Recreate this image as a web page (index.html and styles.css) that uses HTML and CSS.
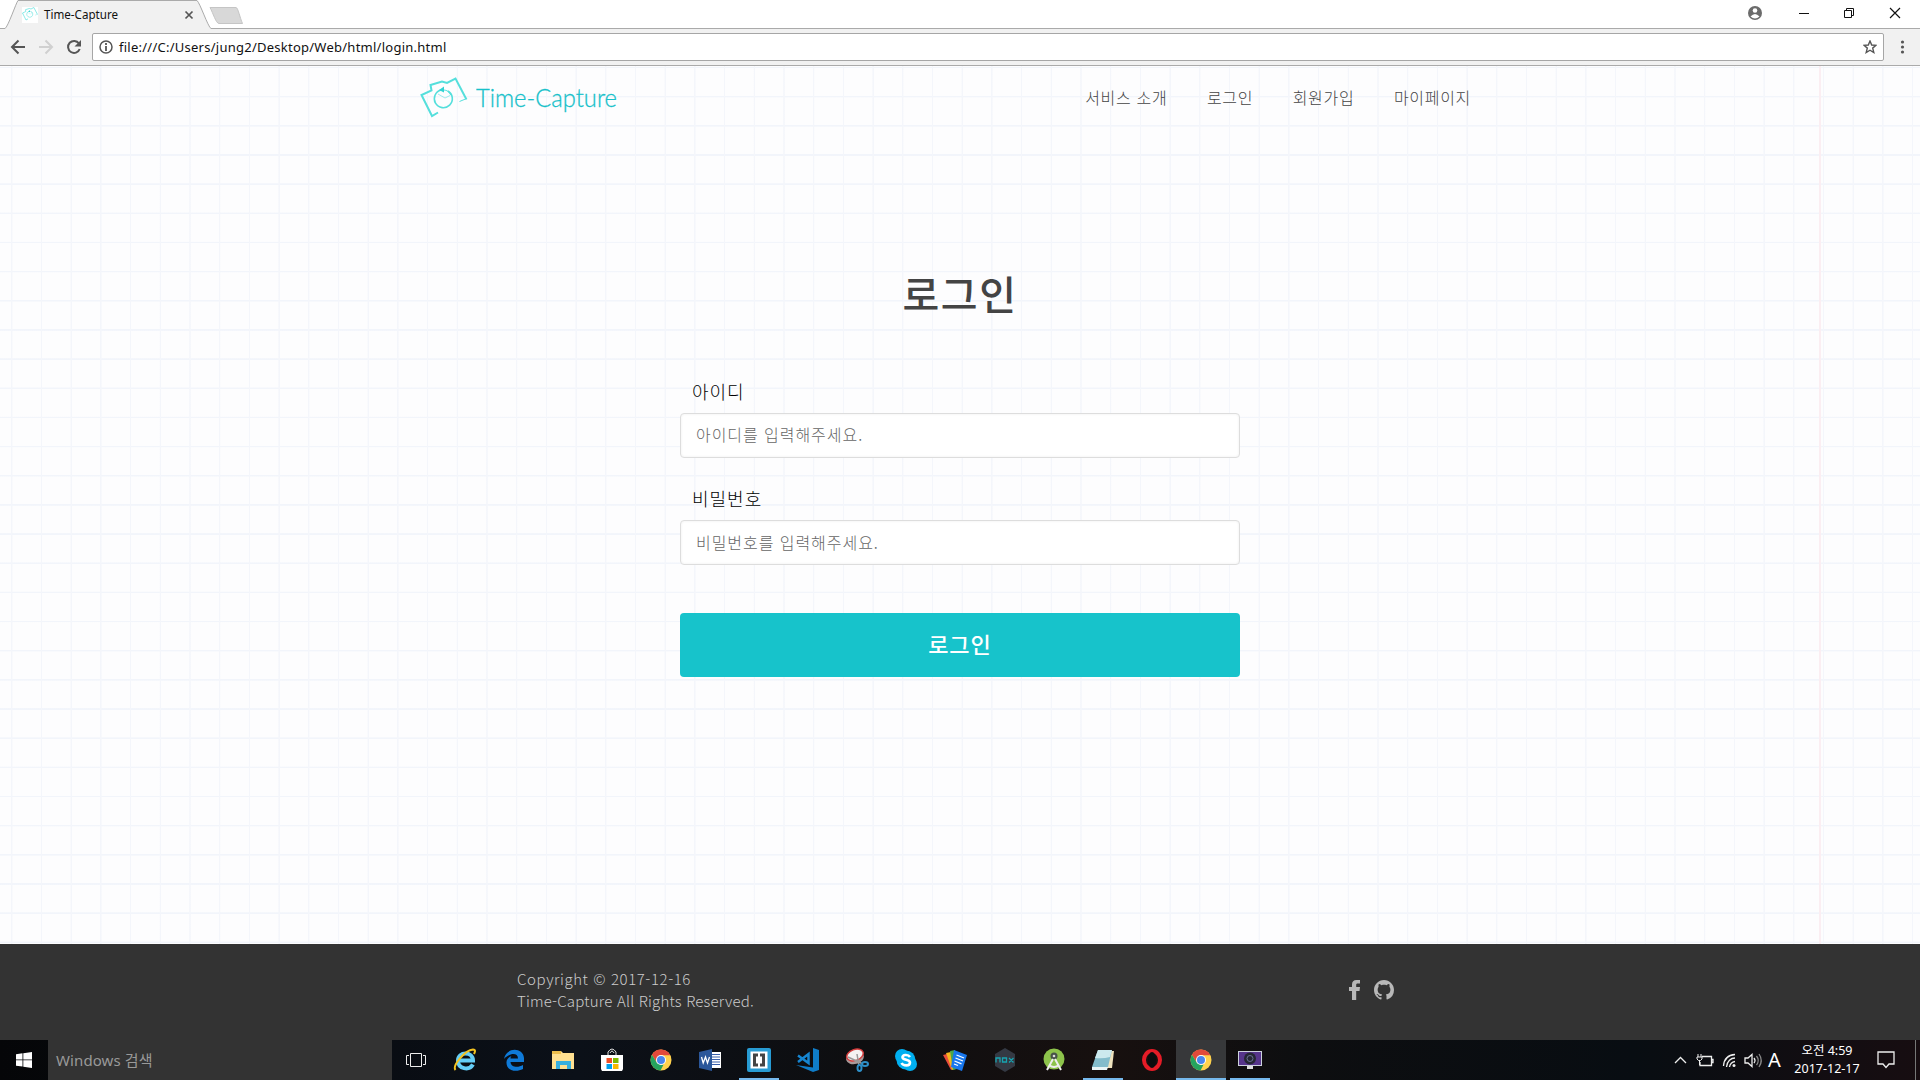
FILE: index.html
```html
<!DOCTYPE html>
<html lang="ko">
<head>
<meta charset="utf-8">
<title>Time-Capture</title>
<link rel="stylesheet" href="styles.css">
</head>
<body>
<svg width="0" height="0" class="defs" aria-hidden="true">
  <defs>
    <symbol id="camera" viewBox="0 0 48 42">
      <g fill="none" stroke="#55dfdc" stroke-linecap="butt">
        <path d="M18 35.500L12 39L1.500 18L11.500 13.500L10.500 8L22 4.500L27 6L35.500 1.500L46.500 22.500" stroke-width="2"/>
        <path d="M45.500 22L39.500 24.500" stroke-width="1"/>
        <path d="M21 13A9 9 0 1 0 28 14" stroke-width="1.600"/>
        <path d="M21 13.500C25 12 29 14 31 18" stroke-width="1.200"/>
        <path d="M18 17L25 21L30 18.500" stroke-width=".8" opacity=".7"/>
      </g>
      <path d="M19 13l5-3.500v6z" fill="#32d3d3"/>
    </symbol>
    <symbol id="chrome" viewBox="0 0 22 22">
      <circle cx="11" cy="11" r="10.500" fill="#ffd24d"/>
      <path d="M1.900 5.800A10.500 10.500 0 0 1 20.300 6.200H11L6.700 13.500z" fill="#e24a3b"/>
      <path d="M1.900 5.800L6.700 13.500L11 15.800H13.500L10.500 21.500A10.500 10.500 0 0 1 1.900 5.800z" fill="#25a35e"/>
      <circle cx="11" cy="11" r="5" fill="#fff"/><circle cx="11" cy="11" r="4" fill="#4a86ee"/>
    </symbol>
  </defs>
</svg>

<header class="browser">
  <div class="titlebar">
    <svg class="tabs" width="260" height="29" viewBox="0 0 260 29">
      <path d="M0 28.500H5C9 27 15 3 18 .500H197C201 3 207 27 211 28.500H260V29H0z" fill="#f1f1f1"/>
      <path d="M0 28.500H5C8 27 16 3 18 .500H197C200 3 208 27 211 28.500H260" fill="none" stroke="#aaa"/>
      <path d="M210 7.500H236C238 7.500 240 18 242.500 23.500H219C216 23.500 213 13 210 7.500z" fill="#d8d8d8" stroke="#c5c5c5"/>
      <path d="M22 7h16v16H22z" fill="#fff"/>
      <use href="#camera" x="22" y="7" width="16" height="14"/>
      <path d="M185.500 11.500l7 7m0-7l-7 7" stroke="#555" stroke-width="1.700"/>
      <text class="tab-title" x="44" y="19" textLength="74" lengthAdjust="spacingAndGlyphs">Time-Capture</text>
    </svg>
    <svg class="window-controls" width="180" height="28" viewBox="0 0 180 28" fill="none" stroke="#111">
      <circle cx="15" cy="13" r="7" fill="#6b6b6b" stroke="none"/>
      <circle cx="15" cy="10.500" r="2.300" fill="#fff" stroke="none"/><path d="M10.500 16.500Q15 11.500 19.500 16.500Q15 20.500 10.500 16.500z" fill="#fff" stroke="none"/>
      <path d="M59 13.500h10M104.500 10.500h7v7h-7zM106.500 10V8.500h7v7H112"/>
      <path d="M150 8l10 10m0-10l-10 10" stroke-width="1.200"/>
    </svg>
  </div>
  <div class="toolbar">
    <svg width="92" height="36" viewBox="0 0 92 36" fill="none" stroke-width="2">
      <path d="M25 18H12m6.500-6.500L12 18l6.500 6.500" stroke="#555"/>
      <path d="M39 18h13m-6.500-6.500L52 18l-6.500 6.500" stroke="#d0d0d0"/>
      <path d="M79 14.500A6 6 0 1 0 79.700 20" stroke="#555"/><path d="M81 11v6.500h-6.500z" fill="#555"/>
    </svg>
    <div class="address">
      <svg width="14" height="14" viewBox="0 0 14 14" fill="none" stroke="#555"><circle cx="7" cy="7" r="6" stroke-width="1.500"/><path d="M7 3v2M7 6v5" stroke-width="1.800"/></svg>
      <span class="url">file:///C:/Users/jung2/Desktop/Web/html/login.html</span>
      <svg class="star" width="14" height="14" viewBox="0 0 14 14"><path d="M7 1l1.700 4 4.300.3-3.300 2.800 1.100 4.400L7 10.200l-3.800 2.300 1.100-4.400L1 5.300 5.300 5z" fill="none" stroke="#555" stroke-width="1.400"/></svg>
    </div>
    <svg width="36" height="36" viewBox="0 0 36 36" fill="#555"><circle cx="18.500" cy="13" r="1.600"/><circle cx="18.500" cy="18" r="1.600"/><circle cx="18.500" cy="23" r="1.600"/></svg>
  </div>
</header>

<main class="page">
  <div class="site-header">
    <a class="logo">
      <svg width="48" height="42"><use href="#camera" width="48" height="42"/></svg>
      <svg class="wordmark" width="150" height="44"><text x="0" y="30.500" textLength="141" lengthAdjust="spacingAndGlyphs">Time-Capture</text></svg>
    </a>
    <nav class="menu"><a>서비스 소개</a><a>로그인</a><a>회원가입</a><a>마이페이지</a></nav>
  </div>
  <form class="login">
    <h1>로그인</h1>
    <label for="uid">아이디</label>
    <input id="uid" type="text" placeholder="아이디를 입력해주세요.">
    <label for="pw">비밀번호</label>
    <input id="pw" type="password" placeholder="비밀번호를 입력해주세요.">
    <button type="button">로그인</button>
  </form>
</main>

<footer class="site-footer">
  <p><span class="date-line">Copyright © 2017-12-16</span><br>Time-Capture All Rights Reserved.</p>
  <div class="social">
    <svg width="12" height="20" viewBox="0 0 12 20" fill="#b8b8b8"><path d="M3 20V11H0V7h3V4.500C3 1.500 4.500 0 7.500 0H11v3.600H8.700C7.500 3.600 7.200 4.200 7.200 5v2H11l-.5 4H7.200v9z"/></svg>
    <svg width="20" height="20" viewBox="0 0 16 16" fill="#b8b8b8"><path d="M8 0C3.580 0 0 3.580 0 8c0 3.540 2.290 6.530 5.470 7.590.4.070.55-.17.55-.38 0-.19-.01-.82-.01-1.490-2.010.37-2.530-.49-2.690-.94-.09-.23-.48-.94-.82-1.130-.28-.15-.68-.52-.01-.53.63-.01 1.080.58 1.230.82.72 1.210 1.870.87 2.330.66.07-.52.28-.87.51-1.070-1.780-.2-3.640-.89-3.640-3.950 0-.87.310-1.590.82-2.150-.08-.2-.36-1.020.08-2.120 0 0 .67-.21 2.200.82.64-.18 1.320-.27 2-.27s1.360.09 2 .27c1.530-1.040 2.200-.82 2.200-.82.44 1.100.16 1.920.08 2.120.51.56.82 1.270.82 2.150 0 3.070-1.870 3.750-3.650 3.950.29.25.54.73.54 1.480 0 1.070-.01 1.930-.01 2.200 0 .21.15.46.55.38A8.010 8.010 0 0 0 16 8c0-4.420-3.580-8-8-8z"/></svg>
  </div>
</footer>

<div class="taskbar">
  <div class="start"><svg width="16" height="16" viewBox="0 0 16 16" fill="#fff"><path d="M0 2.300L6.500 1.300V7.500H0zM7.300 1.200L16 0V7.500H7.300zM0 8.300H6.500V14.600L0 13.700zM7.300 8.300H16V16L7.300 14.800z"/></svg></div>
  <div class="search">Windows 검색</div>
  <div class="apps">
    <div class="app"><svg width="20" height="14" viewBox="0 0 20 14" fill="none" stroke="#eee"><path d="M4.500.500h11v13h-11zM3 2.500H.500v9H3M17 2.500h2.500v9H17"/></svg></div>
    <div class="app"><svg width="24" height="24" viewBox="0 0 24 24" fill="none"><path d="M20 16.500C16 23 5 21 5 12.500C5 3 20 3 20 12.500H6" stroke="#65cdf6" stroke-width="4"/><path d="M2.500 22C-1 18 12 2 20 1.500C23 1.500 22 4 21 6" stroke="#f3c321" stroke-width="2"/></svg></div>
    <div class="app"><svg width="22" height="22" viewBox="0 0 22 22"><path d="M1 10C3-2 20-2 21 9V13H7.500C8 18.500 15 19 20 16V20C12 24 3 21 3.500 13C3.700 10 6 8 8.500 7C7.500 8 7.500 9 7.500 9.500H15C15 3 6 4 1 10z" fill="#0f7ad8"/></svg></div>
    <div class="app"><svg width="22" height="20" viewBox="0 0 22 20"><path d="M0 1h9l2 2h11v16H0z" fill="#ffe091"/><path d="M0 1h9v3H0z" fill="#edbe4c"/><path d="M4 11h15v8h-4v-4H8v4H4z" fill="#38b0df"/></svg></div>
    <div class="app"><svg width="24" height="24" viewBox="0 0 24 24"><path d="M8 7V4Q12-2 16 4V7M10 5Q12 1 14 5" fill="none" stroke="#ddd"/><path d="M1 7h22v14l-1 2H2l-1-2z" fill="#fff"/><path d="M6.500 10H12v5H6.500z" fill="#f04d25"/><path d="M13 10h5.500v5H13z" fill="#7eb900"/><path d="M6.500 16H12v5H6.500z" fill="#00a0ec"/><path d="M13 16h5.500v5H13z" fill="#fbb700"/></svg></div>
    <div class="app"><svg width="22" height="22"><use href="#chrome"/></svg></div>
    <div class="app"><svg width="22" height="22" viewBox="0 0 22 22"><path d="M11 3h11v16H11z" fill="#fff"/><path d="M13 5.500h8M13 8h8M13 10.500h8M13 13h8M13 15.500h8" stroke="#3a60ab"/><path d="M0 3L13 0V22L0 19z" fill="#2b579a"/><path d="M2.500 8l1.700 6L6.500 8l2 6L10.500 8" fill="none" stroke="#fff" stroke-width="1.300"/></svg></div>
    <div class="app running"><svg width="24" height="24" viewBox="0 0 24 24"><rect width="24" height="24" rx="2" fill="#279bd3"/><rect x="3.500" y="3.500" width="17" height="17" fill="#fff"/><path d="M6 5.500h5v3H9v7h2v3H6zM18 5.500h-5v3h2v7h-2v3h5z" fill="#444"/></svg></div>
    <div class="app"><svg width="24" height="24" viewBox="0 0 24 24"><path d="M17 0l6 2v20l-6 2-17-7 17 2.500z" fill="#0f7dc9"/><path d="M2 7.500L12.500 15V6L2 14" fill="none" stroke="#1686d2" stroke-width="2.500"/></svg></div>
    <div class="app"><svg width="24" height="24" viewBox="0 0 24 24"><ellipse cx="10" cy="10" rx="9" ry="6" transform="rotate(-15 10 10)" fill="#a99"/><ellipse cx="10" cy="7" rx="8.500" ry="5.500" transform="rotate(-20 10 7)" fill="#f5f2f2" stroke="#d53c3c" stroke-width="1.500"/><path d="M3 9l15 7M12 6l2 12" stroke="#999" stroke-width="1.500"/><g fill="none" stroke="#2d8fc8" stroke-width="2"><ellipse cx="20" cy="16" rx="3" ry="2"/><ellipse cx="14.500" cy="20" rx="2" ry="3"/></g></svg></div>
    <div class="app"><svg width="24" height="24" viewBox="0 0 24 24"><circle cx="8" cy="8" r="7" fill="#00aff0"/><circle cx="16" cy="16" r="7" fill="#00aff0"/><circle cx="12" cy="12" r="9.500" fill="#00aff0"/><path d="M16 9C14 6 8 6.500 8.500 9.500C9 12.500 16 11 16 14.500C16 18.500 9 18 7.500 15" fill="none" stroke="#fff" stroke-width="2.600"/></svg></div>
    <div class="app"><svg width="24" height="24" viewBox="0 0 24 24"><path d="M0 7l4-1 6 15-2 1z" fill="#e94c3c"/><path d="M3 5l5-1 4 17-3 1z" fill="#f5b51f"/><path d="M7 3l5-1 2 19-4 1z" fill="#4ba74b"/><path d="M11 2l13 5-5 16-11-4z" fill="#1877ee"/><path d="M13.500 7l7.500 3M12.500 10l7.500 3M11.500 13l7 2.800M11 16l4 1.500" stroke="#fff" stroke-width="1.300"/></svg></div>
    <div class="app"><svg width="22" height="24" viewBox="0 0 22 24"><path d="M11 0l10 6v12l-10 6L1 18V6z" fill="#343943"/><path d="M2 14.500V10h4v4.500M8.500 10h4v4h-4zM15 10l4.500 4.500M19.500 10L15 14.500" fill="none" stroke="#16a4b1" stroke-width="1.300"/></svg></div>
    <div class="app"><svg width="22" height="24" viewBox="0 0 22 24"><circle cx="11" cy="11" r="10.500" fill="#8dc34b"/><circle cx="11" cy="8" r="3.500" fill="#475348"/><circle cx="11" cy="8" r="1.300" fill="#ddd"/><path d="M10 11L4 22M12 11l6 11M6 17q5 4 10 0" fill="none" stroke="#eee" stroke-width="2"/></svg></div>
    <div class="app running"><svg width="24" height="22" viewBox="0 0 24 22"><path d="M16 2h7l-2 17h-5z" fill="#eee2bd"/><path d="M7 1h14l-4 17H1z" fill="#83bccb"/><path d="M7 1h14l-2 7q-7 2-15 1z" fill="#cce9ee"/><path d="M1 18h16l-1 3H1z" fill="#e9f4f5"/></svg></div>
    <div class="app"><svg width="22" height="22" viewBox="0 0 22 22"><ellipse cx="11" cy="11" rx="8" ry="9" fill="none" stroke="#e51c27" stroke-width="4"/><ellipse cx="11" cy="11" rx="4" ry="8" fill="#0c0c0e"/></svg></div>
    <div class="app active"><svg width="22" height="22"><use href="#chrome"/></svg></div>
    <div class="app running"><svg width="24" height="20" viewBox="0 0 24 20"><path d="M0 1h24v15H0z" fill="#ccd2dc"/><path d="M1 2h22v13H1z" fill="#56358b"/><circle cx="12" cy="8.500" r="6" fill="#252734"/><circle cx="12" cy="8.500" r="3" fill="none" stroke="#687292"/><path d="M9 16h6v3H9z" fill="#ddd"/></svg></div>
  </div>
  <div class="tray">
    <svg width="92" height="20" viewBox="0 0 92 20" fill="none" stroke="#eee" stroke-width="1.300">
      <path d="M1 13l5.500-5.500L12 13"/>
      <path d="M28 6.500h9.500v9H26V12M37.500 9.500h1.500v3h-1.500"/><path d="M24 4v3M27 4v3M23 7h5v2l-1.500 1.500h-2L23 9zM25.500 11v4" stroke-width="1"/>
      <path d="M49.500 16C50 9 54 5 61 4.500M52.500 17C53 11 57 8 61 8M55.500 17C56 14 58 12 61 11.500"/><circle cx="60" cy="15.500" r="1.500" fill="#eee" stroke="none"/>
      <path d="M71 8h3l4-3.500v12L74 13h-3z"/><path d="M80 8q2 2.500 0 5"/><path d="M82.500 6q3.500 4.500 0 9M85 4q4.500 6.500 0 13" stroke="#888"/>
    </svg>
    <span class="ime">A</span>
    <div class="clock"><div>오전 4:59</div><div>2017-12-17</div></div>
    <svg class="notice" width="18" height="18" viewBox="0 0 18 18" fill="none" stroke="#eee" stroke-width="1.300"><path d="M1 1h16v12h-5l-3 3.500L6 13H1z"/></svg>
    <i class="desktop-edge"></i>
  </div>
</div>
</body>
</html>
```

FILE: styles.css
```css
* { box-sizing: border-box; }
body { margin: 0; width: 1920px; height: 1080px; overflow: hidden; display: flex; flex-direction: column; font-family: "Noto Sans CJK KR", sans-serif; font-weight: 300; background: #fff; }
svg { display: block; flex: none; }
.defs { position: absolute; }

.browser { height: 66px; flex: none; background: #f1f1f1; border-bottom: 1px solid #aaa; }
.titlebar { height: 29px; display: flex; justify-content: space-between; background: linear-gradient(#fff 28px, #aaa 28px); }
.tab-title { font: 400 12px "Noto Sans", sans-serif; fill: #111; }
.toolbar { height: 36px; display: flex; align-items: center; }
.address { flex: 1; height: 28px; border: 1px solid #a6a6a6; border-radius: 2px; background: #fff; display: flex; align-items: center; padding: 0 6px; }
.url { margin-left: 6px; font: 400 13px/20px "Noto Sans", sans-serif; letter-spacing: .25px; color: #111; }
.star { margin-left: auto; }

.page {
  height: 878px; flex: none;
  background:
    linear-gradient(90deg, transparent 1819px, #fbeef2 1819px 1820.500px, transparent 1821px),
    repeating-linear-gradient(90deg, transparent 0 10.900px, #f4f6fb 11.400px 12.200px, transparent 12.700px 29.700px),
    repeating-linear-gradient(180deg, transparent 0 .5px, #f2f5fb 1px 2px, transparent 2.500px 29.160px),
    #fdfdfe;
}
.site-header { height: 64px; padding: 0 449px 0 420px; display: flex; align-items: center; justify-content: space-between; }
.logo { display: flex; align-items: center; gap: 8px; }
.wordmark text { font: 300 25px Lato, sans-serif; fill: #17c1ca; stroke: #17c1ca; stroke-width: .3px; }
.menu { display: flex; gap: 39.500px; padding-bottom: 2px; font-size: 16px; letter-spacing: .7px; color: #444; }
.login { width: 560px; margin: 0 auto; padding-top: 133px; display: flex; flex-direction: column; }
h1 { margin: 0; height: 60px; line-height: 60px; text-align: center; font-size: 40px; font-weight: 500; letter-spacing: 1.500px; color: #444; }
label { padding-left: 12px; font-size: 18px; line-height: 26px; letter-spacing: 1px; color: #000; }
h1 + label { margin-top: 55px; }
input { height: 45px; margin: 9px 0 0; padding: 0 15px 4px; font: inherit; font-size: 16px; letter-spacing: .95px; border: 1px solid #ddd; border-radius: 4px; background: #fff; box-shadow: inset 0 0 3px #eee; }
input::placeholder { color: #666; opacity: 1; }
input + label { margin-top: 27px; }
#pw { padding-bottom: 2px; }
button { height: 64px; margin-top: 48px; padding: 0 0 4px; border: 0; border-radius: 4px; background: #17c3cb; color: #fff; font: 500 22px "Noto Sans CJK KR", sans-serif; letter-spacing: 1px; }

.site-footer { height: 96px; flex: none; padding: 0 526px 0 517px; background: #333; display: flex; justify-content: space-between; color: #ccc; }
.site-footer p { margin: 24px 0 0; font-size: 15px; line-height: 22px; letter-spacing: .2px; }
.date-line { letter-spacing: .58px; }
.social { display: flex; gap: 13px; padding-top: 36px; }

.taskbar { height: 40px; flex: none; display: flex; background: linear-gradient(90deg, #050608, #0b1018 30%, #0e0e10 45%, #17100f 58%, #0d0e10 68%, #080d12 85%, #170d11); color: #fff; }
.start { width: 48px; display: grid; place-items: center; }
.search { width: 344px; padding-left: 8px; background: #333; color: #999; font: 400 15px/41px "Noto Sans", "Noto Sans CJK KR", sans-serif; letter-spacing: .1px; }
.apps { display: grid; grid-template-columns: 48px repeat(17, 49.100px); }
.app { display: grid; place-items: center; }
.running { background: linear-gradient(#76b9ed, #76b9ed) center bottom / 40px 2px no-repeat; }
.active { border-bottom: 2px solid #76b9ed; background: #37383a; padding-top: 2px; }
.tray { flex: 1; display: flex; align-items: center; justify-content: flex-end; }
.ime { width: 14px; margin-left: 2px; font: 400 20px/40px "Noto Sans", sans-serif; }
.clock { width: 90px; text-align: center; font: 400 12.500px/18px "Noto Sans", "Noto Sans CJK KR", sans-serif; }
.notice { margin-left: 5px; }
.desktop-edge { width: 1px; height: 40px; margin: 0 4px 0 20px; background: #777; }
```
